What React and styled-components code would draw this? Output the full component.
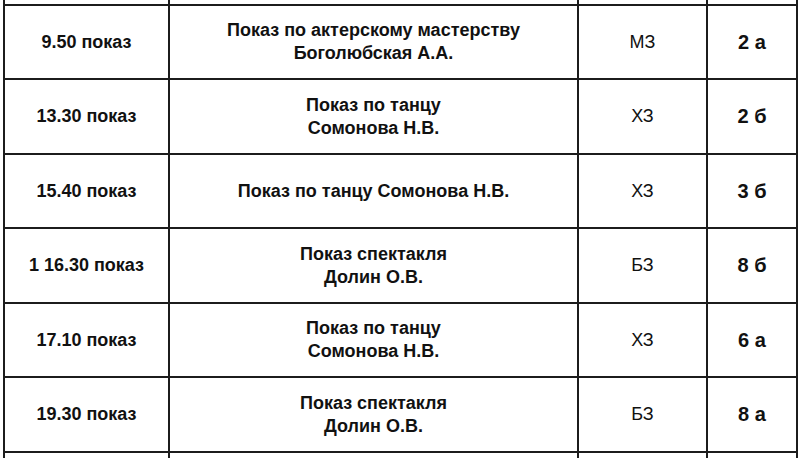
import React from 'react';
import styled, { createGlobalStyle } from 'styled-components';

const GlobalStyle = createGlobalStyle`
  html, body {
    margin: 0;
    padding: 0;
    background: #fff;
    overflow: hidden;
  }
  body {
    font-family: 'Liberation Sans', Arial, Helvetica, sans-serif;
    color: #111;
  }
`;

const Page = styled.div`
  width: 800px;
  height: 458px;
  overflow: hidden;
  padding-left: 3px;
  box-sizing: border-box;
`;

const Table = styled.table`
  border-collapse: collapse;
  table-layout: fixed;
  width: 793px;
`;

const Cell = styled.td`
  border: 2px solid #1c1c1c;
  text-align: center;
  vertical-align: middle;
  padding: 0 6px;
  font-size: 18px;
  line-height: 23px;
  font-weight: ${({ $light }) => ($light ? 400 : 700)};
  ${({ $big }) => $big && 'font-size: 20px;'}
  ${({ $open }) => $open && 'border-top: none;'}
`;

const Row = styled.tr`
  height: ${({ $h }) => $h}px;
`;

const rows = [
  { time: '9.50 показ', title: ['Показ по актерскому мастерству', 'Боголюбская А.А.'], room: 'МЗ', group: '2 а' },
  { time: '13.30 показ', title: ['Показ по танцу', 'Сомонова Н.В.'], room: 'ХЗ', group: '2 б' },
  { time: '15.40 показ', title: ['Показ по танцу Сомонова Н.В.'], room: 'ХЗ', group: '3 б' },
  { time: '1 16.30 показ', title: ['Показ спектакля', 'Долин О.В.'], room: 'БЗ', group: '8 б' },
  { time: '17.10 показ', title: ['Показ по танцу', 'Сомонова Н.В.'], room: 'ХЗ', group: '6 а' },
  { time: '19.30 показ', title: ['Показ спектакля', 'Долин О.В.'], room: 'БЗ', group: '8 а' },
];

export default function App() {
  return (
    <Page>
      <GlobalStyle />
      <Table>
        <colgroup>
          <col style={{ width: 165 }} />
          <col style={{ width: 409 }} />
          <col style={{ width: 129 }} />
          <col style={{ width: 90 }} />
        </colgroup>
        <tbody>
          <Row $h={5}>
            <Cell $open />
            <Cell $open />
            <Cell $open />
            <Cell $open />
          </Row>
          {rows.map((r, i) => (
            <Row key={i} $h={i % 2 ? 75 : 74}>
              <Cell>{r.time}</Cell>
              <Cell>
                {r.title.map((t, j) => (
                  <div key={j}>{t}</div>
                ))}
              </Cell>
              <Cell $light>{r.room}</Cell>
              <Cell $big>{r.group}</Cell>
            </Row>
          ))}
          <Row $h={40}>
            <Cell />
            <Cell />
            <Cell />
            <Cell />
          </Row>
        </tbody>
      </Table>
    </Page>
  );
}
